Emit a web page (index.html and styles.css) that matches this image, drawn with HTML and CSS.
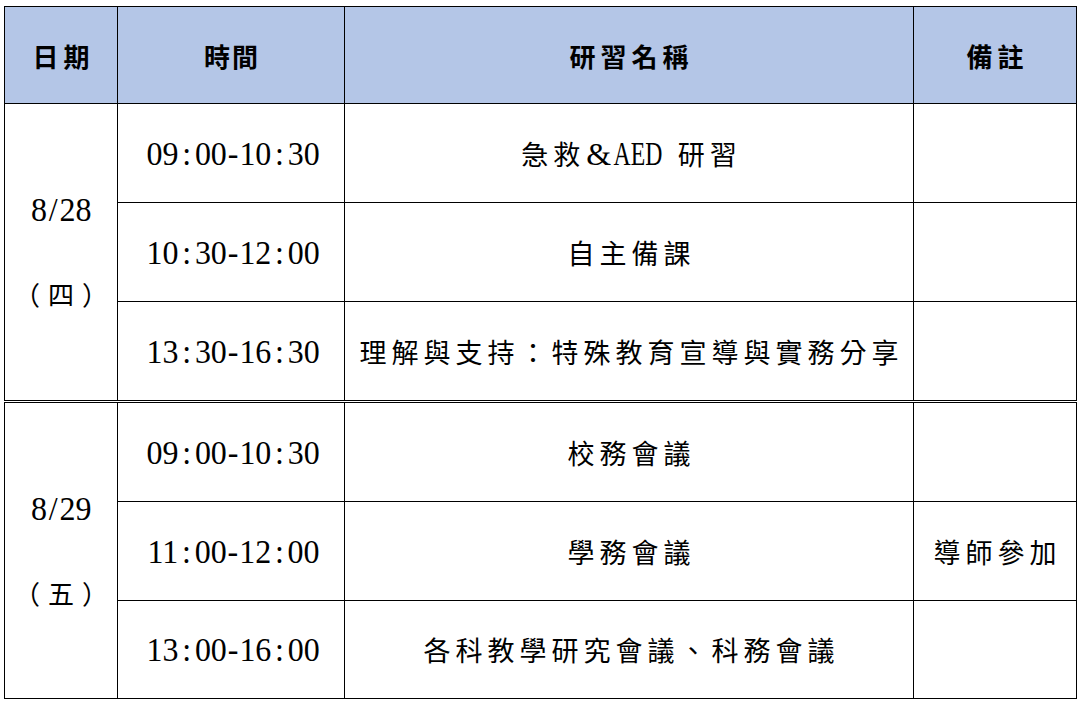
FILE: index.html
```html
<!DOCTYPE html>
<html lang="zh-Hant">
<head>
<meta charset="utf-8">
<title>研習行程</title>
<link rel="stylesheet" href="styles.css">
</head>
<body>
<table class="sched">
  <colgroup>
    <col class="c-date">
    <col class="c-time">
    <col class="c-name">
    <col class="c-note">
  </colgroup>
  <thead>
    <tr class="head">
      <th>日期</th>
      <th class="tight">時間</th>
      <th>研習名稱</th>
      <th>備註</th>
    </tr>
  </thead>
  <tbody>
    <tr>
      <td class="date" rowspan="3">
        <div class="d-num"><span class="num">8<span class="slash">/</span>28</span></div>
        <div class="d-day">（四）</div>
      </td>
      <td class="time"><span class="num">09<span class="colon">:</span>00<span class="dash">-</span>10<span class="colon">:</span>30</span></td>
      <td class="name">急救<span class="amp">&amp;</span><span class="latin">AED</span>研習</td>
      <td class="note"></td>
    </tr>
    <tr>
      <td class="time"><span class="num">10<span class="colon">:</span>30<span class="dash">-</span>12<span class="colon">:</span>00</span></td>
      <td class="name">自主備課</td>
      <td class="note"></td>
    </tr>
    <tr>
      <td class="time"><span class="num">13<span class="colon">:</span>30<span class="dash">-</span>16<span class="colon">:</span>30</span></td>
      <td class="name">理解與支持：特殊教育宣導與實務分享</td>
      <td class="note"></td>
    </tr>
    <tr class="group">
      <td class="date" rowspan="3">
        <div class="d-num"><span class="num">8<span class="slash">/</span>29</span></div>
        <div class="d-day">（五）</div>
      </td>
      <td class="time"><span class="num">09<span class="colon">:</span>00<span class="dash">-</span>10<span class="colon">:</span>30</span></td>
      <td class="name">校務會議</td>
      <td class="note"></td>
    </tr>
    <tr>
      <td class="time"><span class="num">11<span class="colon">:</span>00<span class="dash">-</span>12<span class="colon">:</span>00</span></td>
      <td class="name">學務會議</td>
      <td class="note">導師參加</td>
    </tr>
    <tr class="last">
      <td class="time"><span class="num">13<span class="colon">:</span>00<span class="dash">-</span>16<span class="colon">:</span>00</span></td>
      <td class="name">各科教學研究會議、科務會議</td>
      <td class="note"></td>
    </tr>
  </tbody>
</table>
</body>
</html>
```

FILE: styles.css
```css
html, body {
  margin: 0;
  padding: 0;
  background: #ffffff;
}

body {
  padding: 6px 0 0 4px;
  font-family: "Liberation Serif", "Noto Sans CJK TC", serif;
  color: #000000;
}

.sched {
  border-collapse: collapse;
  table-layout: fixed;
  width: 1072px;
}

.c-date { width: 113px; }
.c-time { width: 227px; }
.c-name { width: 569px; }
.c-note { width: 163px; }

.sched th,
.sched td {
  border: 1px solid #000000;
  padding: 0;
  text-align: center;
  vertical-align: middle;
}

.head th {
  height: 96px;
  background: #b4c6e7;
  font-family: "Noto Sans CJK TC", sans-serif;
  font-weight: 700;
  font-size: 26px;
  letter-spacing: 5px;
  text-indent: 5px;
}

.head th.tight {
  letter-spacing: 2px;
  text-indent: 2px;
}

.sched td {
  height: 98px;
  font-family: "Noto Sans CJK TC", sans-serif;
  font-size: 27px;
  letter-spacing: 5px;
  text-indent: 5px;
}

.sched .last td {
  height: 97px;
}

.sched .group td {
  border-top: 3px double #000000;
}

.num {
  display: inline-block;
  font-family: "Liberation Serif", serif;
  font-size: 34px;
  letter-spacing: 0;
  text-indent: 0;
  transform: scaleX(0.94);
  line-height: 1;
}

.colon {
  margin: 0 4px;
}

.dash {
  margin: 0 1px;
}

.slash {
  margin: 0 2px;
}

.d-num {
  line-height: 42px;
  margin-bottom: 42px;
  text-indent: 0;
}

.d-day {
  line-height: 42px;
  font-size: 26px;
  letter-spacing: 8px;
  text-indent: 8px;
}

.amp {
  font-family: "Liberation Serif", serif;
  font-size: 32px;
  letter-spacing: 2px;
  margin-left: 1px;
}

.latin {
  display: inline-block;
  font-family: "Liberation Serif", serif;
  font-size: 33px;
  letter-spacing: 0;
  text-indent: 0;
  transform: scaleX(0.72);
  margin: 0 6px 0 -9px;
  line-height: 1;
}
```
